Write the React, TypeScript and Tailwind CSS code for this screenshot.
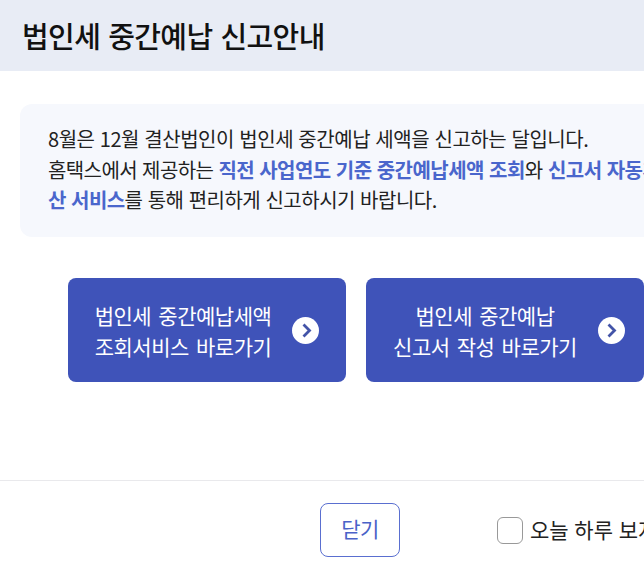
const font = { fontFamily: '"Noto Sans CJK KR", "Noto Sans", sans-serif' }

function CircleArrow() {
  return (
    <span className="w-[27px] h-[27px] shrink-0 rounded-full bg-white flex items-center justify-center">
      <svg width="14" height="17" viewBox="0 0 14 17" fill="none">
        <path d="M4.5 2.5 L10.5 8.5 L4.5 14.5" stroke="#4354a8" strokeWidth="2.8" />
      </svg>
    </span>
  )
}

function LinkButton({ top, bottom, extra }: { top: string; bottom: string; extra: string }) {
  return (
    <a className={`w-[278px] h-[104px] rounded-lg bg-[#3f53b9] text-white flex items-center justify-center gap-[21px] ${extra}`}>
      <span className="pt-[2px] text-[21px] leading-[31px] tracking-[-0.5px] [word-spacing:3px] text-center whitespace-nowrap">
        {top}
        <br />
        {bottom}
      </span>
      <CircleArrow />
    </a>
  )
}

export default function App() {
  return (
    <div className="w-[644px] h-[567px] overflow-hidden bg-white" style={font}>
      <div className="w-[712px]">
        <div className="h-[71px] bg-[#e8ecf5] pl-[22px] flex items-center">
          <h1 className="text-[29px] font-medium tracking-[-0.6px] [word-spacing:2px] text-[#111] whitespace-nowrap">법인세 중간예납 신고안내</h1>
        </div>

        <div className="mx-5 mt-[33px] h-[133px] rounded-xl bg-[#f6f8fd] px-7 py-5 text-[20px] leading-[30.5px] tracking-[-0.45px] [word-spacing:1.2px] text-[#222] whitespace-nowrap">
          8월은 12월 결산법인이 법인세 중간예납 세액을 신고하는 달입니다.
          <br />
          <span className="tracking-[-0.6px]">홈택스에서 제공하는 </span>
          <b className="font-bold text-[#4a66cc] tracking-[-0.55px]">직전 사업연도 기준 중간예납세액 조회</b>와{" "}
          <b className="font-bold text-[#4a66cc] tracking-[-0.55px]">신고서 자동계<br />산 서비스</b>
          <span className="tracking-[-0.5px]">를 통해 편리하게 신고하시기 바랍니다.</span>
        </div>

        <div className="mt-[41px] flex justify-center gap-5">
          <LinkButton top="법인세 중간예납세액" bottom="조회서비스 바로가기" extra="" />
          <LinkButton top="법인세 중간예납" bottom="신고서 작성 바로가기" extra="pl-2" />
        </div>

        <div className="mt-[98px] h-[87px] border-t border-[#e9e9ec] pl-[320px] pt-[22px] flex items-start">
          <button className="w-20 h-[54px] pb-[3px] rounded-lg border border-[#5a6fd0] text-[#4a62c8] text-[21px] tracking-[-0.5px]">닫기</button>
          <label className="ml-[97px] mt-[13px] flex items-center gap-[7px] text-[21px] [word-spacing:1px] text-[#222] whitespace-nowrap">
            <span className="w-[26px] h-[27px] rounded-md border border-[#999] bg-white" />
            <span className="-mt-[2px]">오늘 하루 보지 않기</span>
          </label>
        </div>
      </div>
    </div>
  )
}
